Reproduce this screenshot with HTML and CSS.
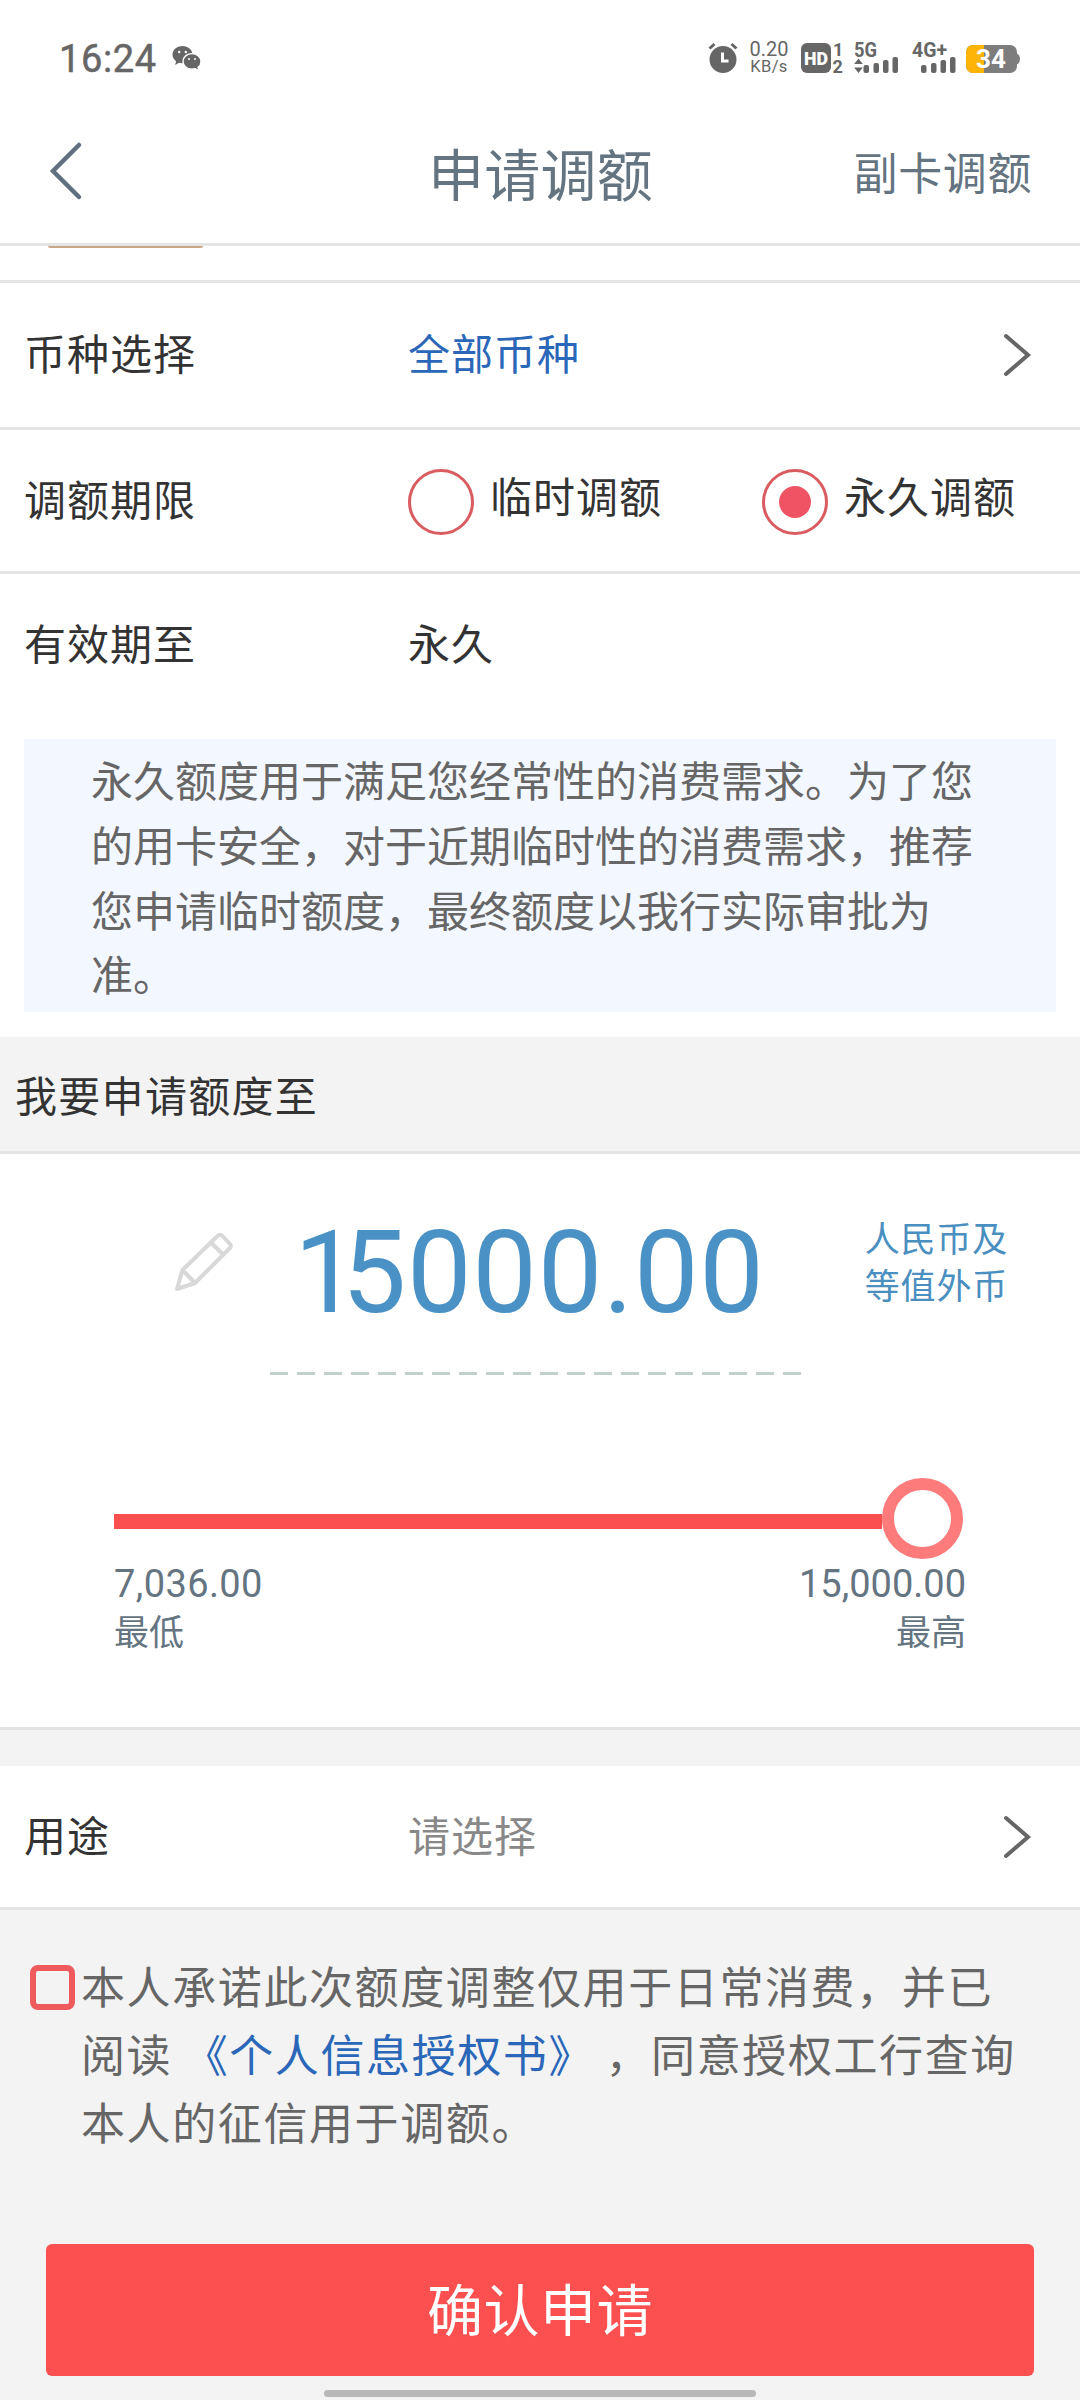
FILE: index.html
```html
<!DOCTYPE html>
<html lang="zh-CN">
<head>
  <meta charset="UTF-8">
  <meta name="viewport" content="width=device-width, initial-scale=1.0">
  <title>申请调额</title>
  <link rel="stylesheet" href="styles.css">
</head>
<body>
  <div class="page">
    <div class="status-bar">
      <span class="time">16:24</span>
      <svg class="wechat" width="30" height="26" viewBox="0 0 30 26">
        <path fill="#666" d="M10.5 1C4.900 1 .5 4.800 .5 9.600c0 2.700 1.400 5 3.500 6.600L3.200 20l3.800-2.300c1.100.3 2.300.5 3.500.5C16 18.200 20.500 14.400 20.500 9.600S16 1 10.500 1z"/>
        <path fill="#666" stroke="#fff" stroke-width="1.400" d="M20 8.600c-5 0-9 3.500-9 7.800s4 7.800 9 7.800c1 0 2-.2 2.900-.4l4.300 1.900-1.100-3.300c1.800-1.400 2.900-3.600 2.900-6 0-4.300-4-7.800-9-7.800z"/>
        <circle cx="7.200" cy="7" r="1.200" fill="#fff"/>
        <circle cx="13.800" cy="7" r="1.200" fill="#fff"/>
        <circle cx="17" cy="14" r="1" fill="#fff"/>
        <circle cx="23" cy="14" r="1" fill="#fff"/>
      </svg>
      <div class="status-icons">
        <svg width="32" height="32" viewBox="0 0 32 32">
          <circle cx="15" cy="17.500" r="13.500" fill="#666"/>
          <path d="M1.500 6.500l5-4.500M28.500 6.500l-5-4.500" stroke="#666" stroke-width="3"/>
          <path d="M14.500 10.500v8.500h6" fill="none" stroke="#fff" stroke-width="3"/>
        </svg>
        <div class="speed"><span>0.20</span><span class="unit">KB/s</span></div>
        <svg class="hd" width="44" height="32" viewBox="0 0 44 32">
          <rect x="0" y="1" width="30" height="30" rx="6" fill="#666"/>
          <text x="15" y="22.500" class="hd-text" text-anchor="middle" textLength="24" lengthAdjust="spacingAndGlyphs">HD</text>
          <text x="32" y="13.500" class="sim-text">1</text>
          <text x="31.500" y="31" class="sim-text">2</text>
        </svg>
        <svg class="net" width="46" height="32" viewBox="0 0 46 32">
          <text x="0" y="15" class="net-text" textLength="23" lengthAdjust="spacingAndGlyphs">5G</text>
          <path d="M4.500 16.500l4.300 5.500h-8.600zM4.500 31l4.300-5.500h-8.600z" fill="#666"/>
          <g fill="#666">
            <rect x="9.500" y="23" width="5.500" height="8" rx="2"/>
            <rect x="19.500" y="21" width="5.500" height="10" rx="2"/>
            <rect x="29" y="18" width="5.500" height="13" rx="2"/>
            <rect x="38.500" y="15" width="5.500" height="16" rx="2"/>
          </g>
        </svg>
        <svg class="net net-4g" width="46" height="32" viewBox="0 0 46 32">
          <text x="0" y="15" class="net-text" textLength="35" lengthAdjust="spacingAndGlyphs">4G+</text>
          <g fill="#666">
            <rect x="9" y="23" width="5.500" height="8" rx="2"/>
            <rect x="19" y="21" width="5.500" height="10" rx="2"/>
            <rect x="28.500" y="18" width="5.500" height="13" rx="2"/>
            <rect x="38" y="15" width="5.500" height="16" rx="2"/>
          </g>
        </svg>
        <svg class="battery" width="54" height="28" viewBox="0 0 54 28">
          <path d="M50 8c2.500 1 4 3 4 6s-1.500 5-4 6z" fill="#7d7d7d"/>
          <rect x="0" y="0" width="51" height="28" rx="7" fill="#7d7d7d"/>
          <path d="M18 0H7a7 7 0 0 0-7 7v14a7 7 0 0 0 7 7h11z" fill="#fdb406"/>
          <text x="25" y="22.500" class="battery-text" text-anchor="middle">34</text>
        </svg>
      </div>
    </div>

    <div class="header">
      <svg class="back" width="34" height="60" viewBox="0 0 34 60">
        <path d="M30 4L4 30l26 26" fill="none" stroke="#607080" stroke-width="4.500" stroke-linecap="round"/>
      </svg>
      <h1>申请调额</h1>
      <a class="sub-card">副卡调额</a>
    </div>

    <div class="card-strip"><div class="card-edge"></div></div>

    <div class="row row-currency">
      <span class="label">币种选择</span>
      <span class="value link">全部币种</span>
      <svg class="arrow" width="30" height="46" viewBox="0 0 30 46">
        <path d="M4 4l22 19L4 42" fill="none" stroke="#666" stroke-width="4" stroke-linecap="round"/>
      </svg>
    </div>
    <div class="row">
      <span class="label">调额期限</span>
      <div class="radio-item"><span class="radio"></span><span class="radio-label">临时调额</span></div>
      <div class="radio-item second"><span class="radio checked"></span><span class="radio-label">永久调额</span></div>
    </div>
    <div class="row row-last">
      <span class="label">有效期至</span>
      <span class="value">永久</span>
    </div>

    <p class="note">永久额度用于满足您经常性的消费需求。为了您的用卡安全，对于近期临时性的消费需求，推荐您申请临时额度，最终额度以我行实际审批为准。</p>

    <h2 class="section-title">我要申请额度至</h2>

    <div class="amount-panel">
      <div class="amount-row">
        <svg class="pencil" width="60" height="60" viewBox="0 0 60 60">
          <g fill="none" stroke="#d8d8d8" stroke-width="4" stroke-linejoin="round">
            <path d="M3 57l5.500-19L44 3.500q2-1.500 4 0l8 8.500q1.500 2 0 4L21 51z"/>
            <path d="M8.500 38L21 51M37 10.500l12.500 12.500"/>
          </g>
        </svg>
        <div class="amount"><span class="one">1</span>5000.00</div>
        <div class="unit-text">人民币及<br>等值外币</div>
      </div>
      <div class="dashes"></div>
      <div class="slider">
        <div class="track"></div>
        <div class="thumb"></div>
      </div>
      <div class="range">
        <div><span class="num">7,036.00</span><span>最低</span></div>
        <div class="max"><span class="num">15,000.00</span><span>最高</span></div>
      </div>
    </div>

    <div class="gap"></div>

    <div class="row row-usage">
      <span class="label">用途</span>
      <span class="value placeholder">请选择</span>
      <svg class="arrow" width="30" height="46" viewBox="0 0 30 46">
        <path d="M4 4l22 19L4 42" fill="none" stroke="#666" stroke-width="4" stroke-linecap="round"/>
      </svg>
    </div>

    <div class="agreement">
      <span class="checkbox"></span>
      <p>本人承诺此次额度调整仅用于日常消费，并已阅读 <a class="link">《个人信息授权书》</a> ，同意授权工行查询本人的征信用于调额。</p>
    </div>

    <button class="submit">确认申请</button>
    <div class="home-bar"></div>
  </div>
</body>
</html>
```
FILE: styles.css
```css
* {
  box-sizing: border-box;
}

body {
  margin: 0;
  background-color: #f3f3f3;
  font-family: "Noto Sans CJK SC", sans-serif;
  color: #333;
}

svg {
  overflow: visible;
}

.page {
  width: 1080px;
  height: 2400px;
  overflow: hidden;
  display: flex;
  flex-direction: column;
}

/* status bar */
.status-bar {
  height: 100px;
  padding: 16px 60px 0 59px;
  background-color: #fff;
  display: flex;
  align-items: center;
  font-family: Roboto, sans-serif;
  color: #666;
}

.time {
  margin-top: 2px;
  font-size: 38px;
  letter-spacing: 0.6px;
  -webkit-text-stroke: 0.5px #666;
}

.wechat {
  margin-left: 15px;
}

.status-icons {
  margin-left: auto;
  display: flex;
  align-items: center;
}

.speed {
  width: 40px;
  margin-left: 9px;
  display: flex;
  flex-direction: column;
  align-items: center;
  font-size: 20px;
  line-height: 17px;
}

.speed .unit {
  font-size: 16.5px;
  letter-spacing: 0.4px;
}

.hd {
  margin-left: 12px;
}

.net {
  margin-left: 9px;
}

.net-4g {
  margin-left: 12px;
}

.battery {
  margin: 2px 0 0 8px;
}

.hd-text {
  font-size: 18px;
  font-weight: 900;
  fill: #fff;
}

.sim-text {
  font-size: 18px;
  font-weight: 700;
  fill: #666;
}

.net-text {
  font-size: 20px;
  font-weight: 700;
  fill: #666;
}

.battery-text {
  font-size: 26px;
  font-weight: 700;
  fill: #fff;
}

/* header */
.header {
  height: 146px;
  padding: 0 48px 0 49px;
  background-color: #fff;
  border-bottom: 3px solid #e4e4e4;
  display: grid;
  grid-template-columns: 1fr auto 1fr;
  align-items: center;
  color: #647481;
}

.back {
  margin-bottom: 2px;
}

h1 {
  margin: 0;
  font-size: 56px;
  line-height: 60px;
  font-weight: 400;
  letter-spacing: 0.3px;
}

.sub-card {
  justify-self: end;
  margin-bottom: 2px;
  font-size: 44px;
  line-height: 50px;
  letter-spacing: 0.6px;
}

.card-strip {
  height: 37px;
  padding-left: 48px;
  background-color: #fff;
  border-bottom: 3px solid #e4e4e4;
}

.card-edge {
  width: 155px;
  height: 2px;
  background-color: #cba78a;
  border-radius: 0 0 4px 4px;
}

/* form rows */
.row {
  height: 144px;
  padding: 0 48px 6px 24px;
  background-color: #fff;
  border-bottom: 3px solid #e4e4e4;
  display: flex;
  align-items: center;
  font-size: 42px;
  line-height: 60px;
  letter-spacing: 1px;
}

.row-currency {
  height: 147px;
}

.row-last {
  height: 141px;
  border-bottom: none;
}

.label {
  width: 384px;
}

.link {
  color: #2b67b8;
}

.placeholder {
  color: #888;
}

.arrow {
  margin-left: auto;
  margin-top: 6px;
}

.radio-item {
  display: flex;
  align-items: center;
}

.radio-item.second {
  margin-left: 100px;
}

.radio {
  width: 66px;
  height: 66px;
  margin: 8px 16px 0 0;
  border: 3px solid #d95c60;
  border-radius: 50%;
  display: flex;
  align-items: center;
  justify-content: center;
}

.radio.checked::before {
  content: "";
  width: 32px;
  height: 32px;
  border-radius: 50%;
  background-color: #ee5464;
}

.radio-label {
  margin-bottom: 6px;
}

.note {
  margin: 0;
  padding: 8px 69px 6px 67px;
  border: solid #fff;
  border-width: 24px 24px 25px;
  background-color: #f3f7ff;
  font-size: 42px;
  line-height: 64.750px;
  color: #666;
}

.section-title {
  height: 117px;
  margin: 0;
  padding: 27px 15px 0;
  border-bottom: 3px solid #e4e4e4;
  font-size: 42px;
  line-height: 60px;
  font-weight: 400;
  letter-spacing: 1.3px;
}

/* amount */
.amount-panel {
  height: 576px;
  background-color: #fff;
  border-bottom: 3px solid #e4e4e4;
}

.amount-row {
  height: 218px;
  padding: 0 72px 0 174px;
  display: flex;
  align-items: flex-start;
}

.pencil {
  margin-top: 78px;
}

.amount {
  margin: 51px 0 0 60px;
  font-family: Roboto, sans-serif;
  font-size: 115px;
  line-height: 136px;
  letter-spacing: 0.7px;
  color: #4a92c6;
}

/* pull the next digit towards the narrow 1 */
.one {
  letter-spacing: -17px;
}

.unit-text {
  margin: 59px 0 0 auto;
  font-size: 35px;
  line-height: 47px;
  letter-spacing: 0.8px;
  color: #4a8fbf;
}

.dashes {
  width: 531px;
  height: 3px;
  margin-left: 270px;
  background: repeating-linear-gradient(to right, #c3cfcc 0 18px, transparent 18px 27px);
}

.slider {
  height: 82px;
  margin: 102px 117px 0 114px;
  display: flex;
  align-items: center;
}

.track {
  flex: 1;
  height: 15px;
  margin-top: 6px;
  background-color: #fa4f4f;
}

.thumb {
  width: 81px;
  height: 81px;
  border: 12px solid #fd7b7b;
  border-radius: 50%;
}

.range {
  margin: 0 114px;
  display: flex;
  justify-content: space-between;
  font-size: 35px;
  line-height: 46px;
  color: #647481;
}

.range span {
  display: block;
}

.range .num {
  padding-top: 2px;
  font-family: Roboto, sans-serif;
  font-size: 38px;
  letter-spacing: 0.4px;
}

.max {
  text-align: right;
}

.max .num {
  letter-spacing: 0;
}

.gap {
  height: 36px;
}

.row-usage {
  height: 144px;
}

/* agreement */
.agreement {
  height: 334px;
  padding: 41px 58px 0 30px;
  display: flex;
}

.checkbox {
  width: 45px;
  height: 45px;
  margin: 14px 6px 0 0;
  border: 6px solid #ef5a5c;
  border-radius: 8px;
}

.agreement p {
  flex: 1;
  margin: 0;
  font-size: 44px;
  line-height: 68px;
  letter-spacing: 1.6px;
  color: #666;
}

.submit {
  height: 132px;
  margin: 0 46px;
  padding: 0 0 7px;
  border: none;
  border-radius: 6px;
  background-color: #fc5050;
  font-family: inherit;
  font-size: 56px;
  letter-spacing: 0.5px;
  color: #fff;
}

.home-bar {
  width: 432px;
  height: 7px;
  margin: 14px auto 0;
  border-radius: 4px;
  background-color: #b8b8b8;
}
```
